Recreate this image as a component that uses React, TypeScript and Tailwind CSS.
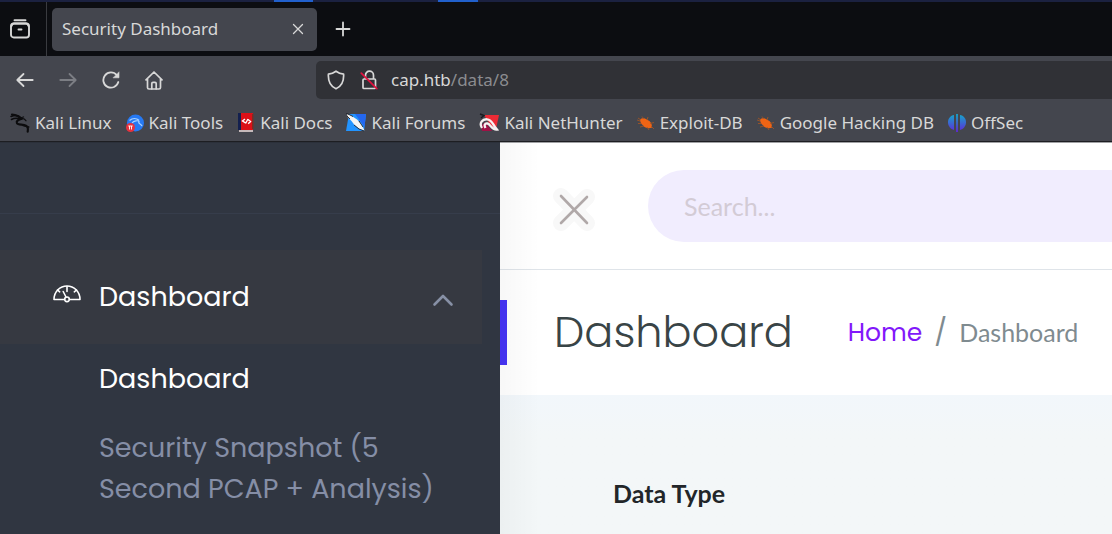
import React from "react";

const stroke = {
  fill: "none",
  stroke: "currentColor",
  strokeLinecap: "round" as const,
  strokeLinejoin: "round" as const,
};

function BoxIcon() {
  return (
    <svg viewBox="0 0 20 20" className="size-5" {...stroke} strokeWidth="1.9">
      <path d="M4.500 1.300h11" />
      <rect x="1" y="4.500" width="18" height="14" rx="2.800" />
      <path d="M1.500 7C2 5 3 4.500 4 4.500h12c1 0 2 .5 2.500 2.500M8.500 10.500h3" />
    </svg>
  );
}

function BackIcon({ flip = false }: { flip?: boolean }) {
  return (
    <svg viewBox="0 0 18 18" className={flip ? "size-[18px] -scale-x-100" : "size-[18px]"} {...stroke} strokeWidth="1.8">
      <path d="M1.500 9h15.200M7.500 3L1.300 9l6.200 6" />
    </svg>
  );
}

function ReloadIcon() {
  return (
    <svg viewBox="0 0 18 18" className="size-[18px]" {...stroke} strokeWidth="1.800">
      <path d="M16.300 11A7.600 7.600 0 1 1 14.800 4.200" />
      <path d="M17 1.200v5.600h-5.600z" fill="currentColor" strokeWidth=".6" />
    </svg>
  );
}

function HomeIcon() {
  return (
    <svg viewBox="0 0 18 19" className="h-[19px] w-[18px]" {...stroke} strokeWidth="1.700">
      <path d="M1 8.800L9 1l8 7.800M2.500 8v8.500q0 1.500 1.500 1.500h10q1.500 0 1.500-1.500V8" />
      <path d="M6.800 17.800v-5.300q0-1.200 1.200-1.200h2q1.200 0 1.200 1.200v5.300" />
    </svg>
  );
}

function ShieldIcon() {
  return (
    <svg viewBox="0 0 18 20" className="h-5 w-[18px]" {...stroke} strokeWidth="1.700">
      <path d="M9 1.200q3.500 2.500 7.600 3C17 11 14.500 16.500 9 18.800 3.500 16.500 1 11 1.400 4.200q4.100-.5 7.600-3z" />
    </svg>
  );
}

function LockIcon() {
  return (
    <svg viewBox="0 0 18 20" className="h-5 w-[18px]" {...stroke} strokeWidth="1.700">
      <path d="M5.500 9V5.200a4 4 0 0 1 8 0V9M4 9h10.500q1 0 1 1v7.500q0 1-1 1H4q-1 0-1-1V10q0-1 1-1z" />
      <path d="M1.300 3.200l15.500 15.500" stroke="#e0103e" strokeWidth="1.700" />
    </svg>
  );
}

function KaliIcon() {
  return (
    <svg viewBox="0 0 20 20" className="size-5" fill="none" stroke="#0c0c0e" strokeLinecap="round">
      <path d="M1 3.500c4-1.800 8-1 10 1.800M1.500 6.500c3-1.800 6-1.500 8.500-.6" strokeWidth="1.500" />
      <path d="M2 1.500c4 .5 7 2 9 4.500-3 .8-5 2.200-4 4.200 1.200 2 6 .8 9 2.400 1.800 1 2.300 3 1.700 6" strokeWidth="2.200" />
      <path d="M11 5.500c2.500-.3 4 .5 5 2.300M13 12.500l5.800 1.500M10 5l3.500-1" strokeWidth="1.300" />
    </svg>
  );
}

function ToolsIcon() {
  return (
    <svg viewBox="0 0 18 18" className="size-[18px]" fill="none">
      <circle cx="9.500" cy="9" r="8.500" fill="#2679f3" />
      <path d="M3.500 6.500c3-2.500 7-2.300 9.500-.2M6 9c2-2.500 6-2.500 7-1.800-1.500 2.800 2.500 2.300 3 5" stroke="#a9d2ff" strokeWidth="1.200" />
      <circle cx="4.500" cy="13.500" r="4.500" fill="#e6323d" />
      <path d="M2.300 12h4.400M3.500 12v3.500M5.500 12v3.500" stroke="#fff" strokeWidth=".9" />
    </svg>
  );
}

function DocsIcon() {
  return (
    <svg viewBox="0 0 18 19" className="h-[19px] w-[18px]" fill="none">
      <path d="M3 0h13v17H3z" fill="#db1018" />
      <path d="M1 0h3v17H1z" fill="#13204f" />
      <path d="M15 1h1.500v15H15z" fill="#7e2c22" />
      <path d="M2 17h14v2H2z" fill="#c6b9ba" />
      <path d="M8 6L5.500 8l3 1.800M11 6l-2.500 4.500M11 6.500l2.500 2-2.300 2.200" stroke="#fff" strokeWidth="1.400" />
    </svg>
  );
}

function ForumsIcon() {
  return (
    <svg viewBox="0 0 20 19" className="h-[19px] w-5" fill="none">
      <path d="M3 1h17l-2 17H0z" fill="#2294ff" />
      <path d="M9 1h11l-1.500 13z" fill="#2467ef" />
      <path d="M1 1l4 1.500 6 4 4 4 3.500 7-5-1.500-5-4-3-4-4-4z" fill="#f5f5f3" />
      <path d="M0 0l4 2 3 1.500M1 3l3 3M8 12l5 4 5 2M13 8l4 6" stroke="#202329" strokeWidth=".9" />
    </svg>
  );
}

function NetHunterIcon() {
  return (
    <svg viewBox="0 0 20 19" className="h-[19px] w-5" fill="none">
      <path d="M5 2h15l-3 14-5-3z" fill="#ed2b35" />
      <path d="M2 13l4-4 7 9H3z" fill="#a01145" />
      <path d="M3 15C-.5 9.500 4 6 8 6.300c5 .4 5.500 4.700 8 7.700l2 2.500C12.500 17 11.500 11 8.500 10.500 5.500 10 5 12.500 6.500 15" stroke="#f7f2f2" strokeWidth="2.300" />
      <path d="M1 1l4 1.500L2 5" stroke="#191b20" strokeWidth="1.400" />
    </svg>
  );
}

function BugIcon() {
  return (
    <svg viewBox="0 0 18 16" className="h-4 w-[18px]" fill="none">
      <path d="M3 4.500c2-2 5-1.500 7.500.5 3 1.200 4.500 3.500 4.500 7.500-3 1.500-7 .5-9-2-1.500-1.500-3-3.500-3-6z" fill="#f06414" />
      <path d="M4 5L1 3M7 4L5 1.500M10 5l1-3M13 8.500l4-1M14 11l3 3M10 12l2 3M7 11l-4 1M4 8.500H1M3 6L0 5" stroke="#a9551f" strokeWidth=".8" />
    </svg>
  );
}

function OffSecIcon() {
  return (
    <svg viewBox="0 0 18 18" className="size-[18px]">
      <defs>
        <linearGradient id="offsec" gradientUnits="userSpaceOnUse" x1="0" x2="0" y1="0" y2="18">
          <stop stopColor="#14a9cb" />
          <stop offset="1" stopColor="#6126d9" />
        </linearGradient>
      </defs>
      <g fill="url(#offsec)">
        <path d="M6 1v15C2.500 15 0 12 0 8.200S2.500 1.600 6 1z" />
        <path d="M12 1v15c3.500-1 6-4 6-7.800S15.500 1.600 12 1z" />
        <path d="M8.100 0h1.800v18H8.100z" />
      </g>
    </svg>
  );
}

function GaugeIcon() {
  return (
    <svg viewBox="0 0 28 18" className="mb-1.5 h-[18px] w-7" {...stroke} strokeWidth="1.600">
      <path d="M11.500 14.500H1C1 6.500 7 1 14 1s13 5.500 13 13.500H16.500" />
      <circle cx="14" cy="14.300" r="2.300" />
      <path d="M13 12L10.200 6.500M14 1.500v5M4.500 5l2.200 1.800M23.500 5l-2.200 1.800" />
    </svg>
  );
}

const bookmarks = [
  { label: "Kali Linux", Icon: KaliIcon },
  { label: "Kali Tools", Icon: ToolsIcon },
  { label: "Kali Docs", Icon: DocsIcon },
  { label: "Kali Forums", Icon: ForumsIcon },
  { label: "Kali NetHunter", Icon: NetHunterIcon },
  { label: "Exploit-DB", Icon: BugIcon },
  { label: "Google Hacking DB", Icon: BugIcon },
  { label: "OffSec", Icon: OffSecIcon },
];

function BrowserChrome() {
  return (
    <header className="shrink-0 border-b border-[#1d1e22] bg-[#44464e] font-['Noto_Sans',sans-serif] text-[17px] text-[#d8d8d8]">
      <div className="flex h-0.5 bg-[#1b2140]">
        <span className="ml-[274px] w-[39px] bg-[#2160cc]" />
        <span className="ml-[125px] w-10 bg-[#2160cc]" />
      </div>
      <div className="flex h-[54px] items-center bg-[#0c0d11]">
        <button aria-label="Recent browsing" className="flex h-full w-[47px] items-center border-r border-[#3a3b40] pl-2.5">
          <BoxIcon />
        </button>
        <div className="ml-[5px] flex h-[43px] w-[265px] items-center justify-between rounded-[5px] bg-[#44464e] pr-[13px] pl-[10px]">
          <span>Security Dashboard</span>
          <button aria-label="Close tab">
            <svg viewBox="0 0 12 12" className="size-3" {...stroke} strokeWidth="1.300">
              <path d="M1.500 1.500l9 9M10.500 1.500l-9 9" />
            </svg>
          </button>
        </div>
        <button aria-label="New tab" className="ml-[18px]">
          <svg viewBox="0 0 16 16" className="size-4" {...stroke} strokeWidth="1.800">
            <path d="M8 1.500v13M1.500 8h13" />
          </svg>
        </button>
      </div>
      <div className="flex h-12 items-center">
        <nav aria-label="Browser" className="flex w-[316px] items-center gap-[25px] pl-4">
          <button aria-label="Back"><BackIcon /></button>
          <button aria-label="Forward" className="text-[#7c7e84]"><BackIcon flip /></button>
          <button aria-label="Reload"><ReloadIcon /></button>
          <button aria-label="Home"><HomeIcon /></button>
        </nav>
        <div className="flex h-[38px] flex-1 items-center rounded-l-[5px] bg-[#303136] pl-[11px]">
          <ShieldIcon />
          <span className="mr-[13px] ml-[15px]"><LockIcon /></span>
          <span>cap.htb<span className="text-[#8b8c90]">/data/8</span></span>
        </div>
      </div>
      <nav aria-label="Bookmarks" className="flex h-[37px] items-center gap-3.5 pl-2.5">
        {bookmarks.map(({ label, Icon }) => (
          <a key={label} href="#" className="flex items-center gap-[5px] whitespace-nowrap">
            <Icon />
            {label}
          </a>
        ))}
      </nav>
    </header>
  );
}

function Sidebar() {
  return (
    <aside className="w-[500px] shrink-0 border-t border-[#2b303a] bg-[#303641] font-[Poppins,sans-serif] text-[27px] text-white">
      <div className="h-[71px] border-b border-[#363d4b]" />
      <nav aria-label="Main" className="pt-9">
        <button className="flex h-[94px] w-[482px] items-center bg-[#363941] pr-7 pl-[53px]">
          <GaugeIcon />
          <span className="ml-[18px]">Dashboard</span>
          <svg viewBox="0 0 22 14" className="mt-1.5 ml-auto h-3.5 w-[22px] text-[#8790a5]" {...stroke} strokeWidth="2.600">
            <path d="M2.500 11.500L11 3l8.500 8.500" />
          </svg>
        </button>
        <div className="flex flex-col gap-7 pt-3.5 pr-10 pl-[99px] leading-[41px]">
          <a href="#">Dashboard</a>
          <a href="#" className="text-[#858ea6]">
            Security Snapshot (5<br />Second PCAP + Analysis)
          </a>
        </div>
      </nav>
    </aside>
  );
}

function Content() {
  return (
    <main className="relative flex min-w-0 flex-1 flex-col overflow-hidden border-t border-[#a0a1a4] bg-white font-[Lato,sans-serif] text-[25px]">
      <div className="pointer-events-none absolute inset-y-0 left-0 w-10 bg-linear-to-r from-black/3 to-transparent" />
      <div className="flex h-[127px] items-center border-b border-[#dfe4e9]">
        <button aria-label="Close menu" className="ml-[52px]">
          <svg viewBox="0 0 44 44" className="mt-2 size-11" {...stroke}>
            <path d="M9 8l26 27M35 9L9 35" stroke="#f8f8f8" strokeWidth="16" />
            <path d="M9 8l26 27M35 9L9 35" stroke="#b0a8a8" strokeWidth="2.600" />
          </svg>
        </button>
        <input
          aria-label="Search"
          placeholder="Search..."
          className="ml-[52px] h-[72px] min-w-0 flex-1 rounded-l-full bg-[#f1edfe] pl-9 outline-none placeholder:text-[#d3cbd5]"
        />
      </div>
      <div className="flex h-[125px] items-center">
        <span className="h-[65px] w-[7px] bg-[#4634f4]" />
        <h1 className="ml-[47px] font-[Poppins,sans-serif] text-[43px] font-light text-[#394446]">Dashboard</h1>
        <nav aria-label="Breadcrumb" className="ml-[55px] flex items-center gap-3 whitespace-nowrap text-[#7f8b90]">
          <a href="#" className="font-[Poppins,sans-serif] text-[#8218fa]">Home</a>
          <span className="font-[Poppins,sans-serif] text-[27px]">/</span>
          <span>Dashboard</span>
        </nav>
      </div>
      <section className="flex-1 bg-linear-to-b from-[#f2f7fb] to-[#f3f7f8] to-30% pt-20 pl-[113px]">
        <h2 className="font-bold text-[#222629]">Data Type</h2>
      </section>
    </main>
  );
}

export default function App() {
  return (
    <div className="flex min-h-screen flex-col">
      <BrowserChrome />
      <div className="flex flex-1">
        <Sidebar />
        <Content />
      </div>
    </div>
  );
}
